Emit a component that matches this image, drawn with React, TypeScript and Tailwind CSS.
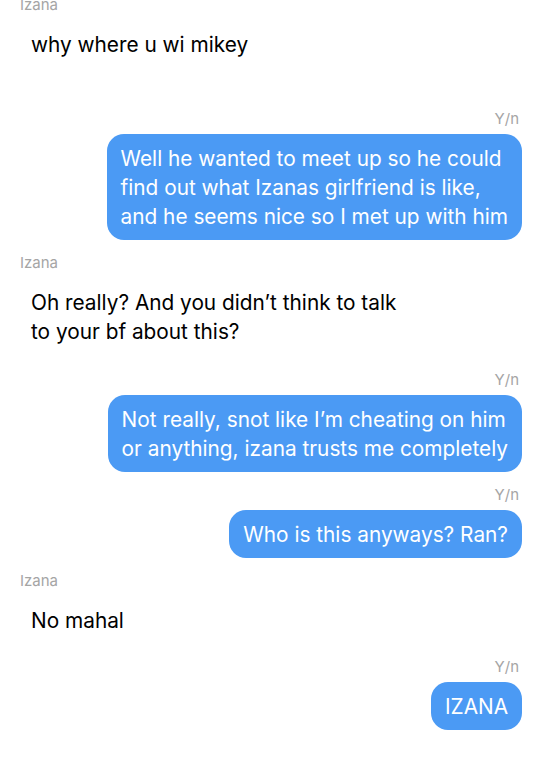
type Msg = {
  from: 'in' | 'out';
  name: string;
  lines: string[];
  gapTop: string;
};

const messages: Msg[] = [
  { from: 'in', name: 'Izana', lines: ['why where u wi mikey'], gapTop: 'mt-[-3px]' },
  {
    from: 'out',
    name: 'Y/n',
    lines: [
      'Well he wanted to meet up so he could',
      'find out what Izanas girlfriend is like,',
      'and he seems nice so I met up with him',
    ],
    gapTop: 'mt-[43px]',
  },
  {
    from: 'in',
    name: 'Izana',
    lines: ['Oh really? And you didn’t think to talk', 'to your bf about this?'],
    gapTop: 'mt-[15px]',
  },
  {
    from: 'out',
    name: 'Y/n',
    lines: ['Not really, snot like I’m cheating on him', 'or anything, izana trusts me completely'],
    gapTop: 'mt-[17px]',
  },
  { from: 'out', name: 'Y/n', lines: ['Who is this anyways? Ran?'], gapTop: 'mt-[15px]' },
  { from: 'in', name: 'Izana', lines: ['No mahal'], gapTop: 'mt-[15px]' },
  { from: 'out', name: 'Y/n', lines: ['IZANA'], gapTop: 'mt-[15px]' },
];

function Bubble({ msg }: { msg: Msg }) {
  const out = msg.from === 'out';
  return (
    <div className={`flex flex-col ${out ? 'items-end' : 'items-start -ml-[1px]'} ${msg.gapTop}`}>
      <div className="px-[3px] text-[15px] leading-[16px] text-[#a5a5a5]">{msg.name}</div>
      <div
        className={`mt-[7px] rounded-[17px] px-[14px] pt-[10px] pb-[9px] text-[20.8px] leading-[29px] whitespace-nowrap ${
          out ? 'bg-[#4b9af4] text-white' : 'bg-white text-black'
        }`}
      >
        {msg.lines.map((l, i) => (
          <div key={i}>{l}</div>
        ))}
      </div>
    </div>
  );
}

export default function App() {
  return (
    <div
      className="min-h-[776px] w-[540px] overflow-hidden bg-white px-[18px]"
      style={{ fontFamily: 'Inter, "Liberation Sans", sans-serif' }}
    >
      {messages.map((m, i) => (
        <Bubble key={i} msg={m} />
      ))}
    </div>
  );
}
